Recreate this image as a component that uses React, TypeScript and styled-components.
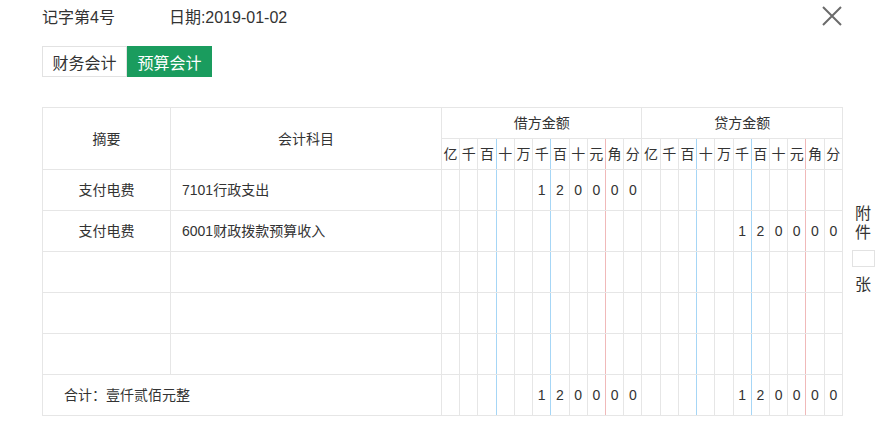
import React from "react";
import styled, { createGlobalStyle } from "styled-components";

const GlobalStyle = createGlobalStyle`
  html, body { margin: 0; padding: 0; background: #fff; }
  body {
    font-family: "Liberation Sans", "Noto Sans CJK SC", sans-serif;
    color: #333;
  }
`;

const Page = styled.div`
  position: relative;
  width: 889px;
  height: 423px;
  padding: 8px 0 0 42px;
  box-sizing: border-box;
`;

const TitleBar = styled.div`
  display: flex;
  gap: 54px;
  font-size: 16px;
  line-height: 20px;
  height: 20px;
`;

const CloseButton = styled.button`
  position: absolute;
  top: 5px;
  left: 821px;
  width: 22px;
  height: 22px;
  padding: 0;
  border: none;
  background: transparent;
  cursor: pointer;
`;

const Tabs = styled.div`
  display: flex;
  margin-top: 18px;
`;

const Tab = styled.div<{ $active?: boolean }>`
  box-sizing: border-box;
  width: 85px;
  height: 31px;
  display: flex;
  align-items: center;
  justify-content: center;
  font-size: 16px;
  border: 1px solid ${(p) => (p.$active ? "#1a9c5e" : "#e2e2e2")};
  background: ${(p) => (p.$active ? "#1a9c5e" : "#fff")};
  color: ${(p) => (p.$active ? "#fff" : "#333")};
`;

const Body = styled.div`
  display: flex;
  margin-top: 30px;
  align-items: flex-start;
`;

const Table = styled.table`
  border-collapse: collapse;
  table-layout: fixed;
  width: 801px;
  font-size: 14px;
  color: #333;
`;

const Cell = styled.td<{
  $align?: "left" | "center";
  $h?: number;
  $rc?: string;
  $lc?: string;
  $pl?: number;
}>`
  border: 1px solid #e6e6e6;
  ${(p) => (p.$rc ? `border-right-color: ${p.$rc};` : "")}
  ${(p) => (p.$lc ? `border-left-color: ${p.$lc};` : "")}
  height: ${(p) => p.$h ?? 40}px;
  padding: 0 0 0 ${(p) => p.$pl ?? 0}px;
  text-align: ${(p) => p.$align ?? "center"};
  vertical-align: middle;
  white-space: nowrap;
  overflow: hidden;
  box-sizing: border-box;
  line-height: 18px;
`;

const Side = styled.div`
  width: 24px;
  margin-left: 8px;
  margin-top: 97px;
  display: flex;
  flex-direction: column;
  align-items: center;
  font-size: 16px;
  line-height: 19px;
  color: #333;
`;

const AttachBox = styled.div`
  width: 23px;
  height: 17px;
  box-sizing: border-box;
  border: 1px solid #e2e2e2;
  margin: 8px 0;
`;

const UNITS = ["亿", "千", "百", "十", "万", "千", "百", "十", "元", "角", "分"];
const BLUE = "#a6d6f6";
const RED = "#f0b9b9";

const edge = (i: number) => {
  const rc = i === 2 || i === 5 ? BLUE : i === 8 ? RED : undefined;
  const lc = i === 3 || i === 6 ? BLUE : i === 9 ? RED : undefined;
  return { $rc: rc, $lc: lc };
};

type Row = { summary: string; account: string; debit?: string; credit?: string };

const ROWS: Row[] = [
  { summary: "支付电费", account: "7101行政支出", debit: "120000" },
  { summary: "支付电费", account: "6001财政拨款预算收入", credit: "120000" },
  { summary: "", account: "" },
  { summary: "", account: "" },
  { summary: "", account: "" },
];

const digitsFor = (v?: string): string[] => {
  const arr = Array(11).fill("");
  if (!v) return arr;
  const chars = v.split("");
  for (let k = 0; k < chars.length; k++) arr[11 - chars.length + k] = chars[k];
  return arr;
};

const AmountCells: React.FC<{ value?: string; h?: number }> = ({ value, h }) => (
  <>
    {digitsFor(value).map((d, i) => (
      <Cell key={i} $h={h} {...edge(i)}>
        {d}
      </Cell>
    ))}
  </>
);

export default function App() {
  return (
    <>
      <GlobalStyle />
      <Page>
        <TitleBar>
          <span>记字第4号</span>
          <span>日期:2019-01-02</span>
        </TitleBar>
        <CloseButton aria-label="关闭">
          <svg width="22" height="22" viewBox="0 0 22 22">
            <path d="M2 2 L20 20 M20 2 L2 20" stroke="#6b6b6b" strokeWidth="2" fill="none" />
          </svg>
        </CloseButton>
        <Tabs>
          <Tab>财务会计</Tab>
          <Tab $active>预算会计</Tab>
        </Tabs>
        <Body>
          <Table>
            <colgroup>
              <col style={{ width: 128 }} />
              <col style={{ width: 271 }} />
              {Array.from({ length: 22 }).map((_, i) => (
                <col key={i} />
              ))}
            </colgroup>
            <thead>
              <tr>
                <Cell as="th" rowSpan={2} $h={31} style={{ fontWeight: "normal" }}>
                  摘要
                </Cell>
                <Cell as="th" rowSpan={2} $h={31} style={{ fontWeight: "normal" }}>
                  会计科目
                </Cell>
                <Cell as="th" colSpan={11} $h={31} style={{ fontWeight: "normal" }}>
                  借方金额
                </Cell>
                <Cell as="th" colSpan={11} $h={31} style={{ fontWeight: "normal" }}>
                  贷方金额
                </Cell>
              </tr>
              <tr>
                {[...UNITS, ...UNITS].map((u, i) => (
                  <Cell key={i} $h={31} {...edge(i % 11)}>
                    {u}
                  </Cell>
                ))}
              </tr>
            </thead>
            <tbody>
              {ROWS.map((r, i) => (
                <tr key={i}>
                  <Cell $h={41}>{r.summary}</Cell>
                  <Cell $h={41} $align="left" $pl={11}>
                    {r.account}
                  </Cell>
                  <AmountCells value={r.debit} h={41} />
                  <AmountCells value={r.credit} h={41} />
                </tr>
              ))}
              <tr>
                <Cell colSpan={2} $h={41} $align="left" $pl={21}>
                  合计：壹仟贰佰元整
                </Cell>
                <AmountCells value="120000" h={41} />
                <AmountCells value="120000" h={41} />
              </tr>
            </tbody>
          </Table>
          <Side>
            <span>附</span>
            <span>件</span>
            <AttachBox />
            <span>张</span>
          </Side>
        </Body>
      </Page>
    </>
  );
}
